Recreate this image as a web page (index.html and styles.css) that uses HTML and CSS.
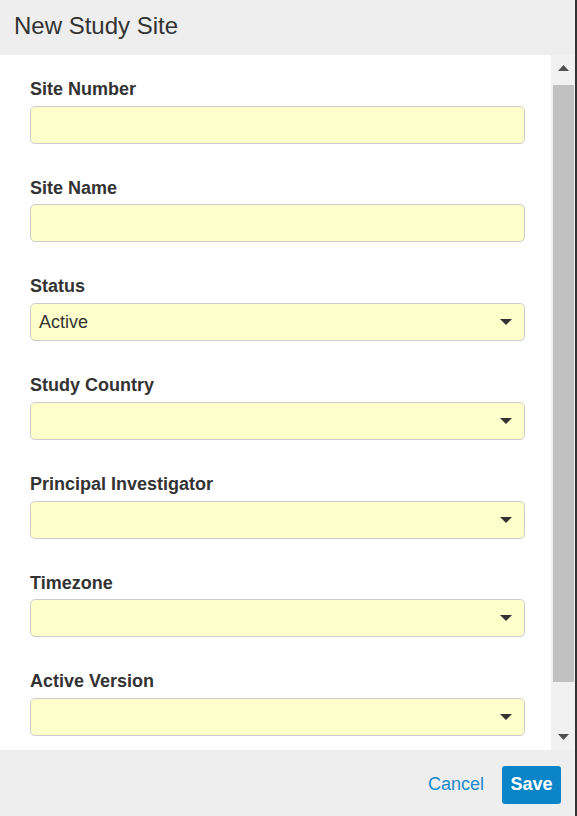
FILE: index.html
```
<!DOCTYPE html>
<html>
<head>
<meta charset="utf-8">
<title>New Study Site</title>
<link rel="stylesheet" href="styles.css">
</head>
<body>
<div class="dialog">
  <div class="header"><h1 class="title">New Study Site</h1></div>
  <div class="middle">
    <div class="content">
      <div class="group">
        <label class="label">Site Number</label>
        <input class="input" type="text">
      </div>
      <div class="group">
        <label class="label">Site Name</label>
        <input class="input" type="text">
      </div>
      <div class="group">
        <label class="label">Status</label>
        <div class="input select"><span class="value">Active</span><svg class="caret" width="12" height="6" viewBox="0 0 12 6"><path d="M0 0H12L6 6Z"/></svg></div>
      </div>
      <div class="group">
        <label class="label">Study Country</label>
        <div class="input select"><span class="value"></span><svg class="caret" width="12" height="6" viewBox="0 0 12 6"><path d="M0 0H12L6 6Z"/></svg></div>
      </div>
      <div class="group">
        <label class="label">Principal Investigator</label>
        <div class="input select"><span class="value"></span><svg class="caret" width="12" height="6" viewBox="0 0 12 6"><path d="M0 0H12L6 6Z"/></svg></div>
      </div>
      <div class="group">
        <label class="label">Timezone</label>
        <div class="input select"><span class="value"></span><svg class="caret" width="12" height="6" viewBox="0 0 12 6"><path d="M0 0H12L6 6Z"/></svg></div>
      </div>
      <div class="group">
        <label class="label">Active Version</label>
        <div class="input select"><span class="value"></span><svg class="caret" width="12" height="6" viewBox="0 0 12 6"><path d="M0 0H12L6 6Z"/></svg></div>
      </div>
    </div>
    <div class="scrollbar">
      <div class="sb-btn"><svg width="11" height="6" viewBox="0 0 11 6"><path d="M5.5 0L11 6H0Z"/></svg></div>
      <div class="sb-track"><div class="sb-thumb"></div></div>
      <div class="sb-btn"><svg width="11" height="6" viewBox="0 0 11 6"><path d="M0 0H11L5.5 6Z"/></svg></div>
    </div>
  </div>
  <div class="footer">
    <a class="cancel" href="#">Cancel</a>
    <button class="save" type="button">Save</button>
  </div>
</div>
</body>
</html>
```
FILE: styles.css
```
html, body {
  margin: 0;
  padding: 0;
  height: 100%;
}
body {
  background: #333333;
  font-family: "Liberation Sans", Arial, sans-serif;
  color: #333333;
}
.dialog {
  width: 575px;
  height: 816px;
  display: flex;
  flex-direction: column;
  background: #ffffff;
}
.header {
  height: 55px;
  flex: none;
  background: #eeeeee;
  display: flex;
  align-items: center;
  padding-left: 14px;
  box-sizing: border-box;
}
.title {
  margin: 0;
  font-size: 24px;
  font-weight: normal;
  color: #333333;
  line-height: 28px;
  position: relative;
  top: -2px;
}
.middle {
  flex: none;
  height: 695px;
  display: flex;
}
.content {
  flex: 1;
  overflow: hidden;
  padding: 22px 26px 0 30px;
  background: #ffffff;
}
.group {
  margin-bottom: 32px;
}
.label {
  display: block;
  font-weight: bold;
  font-size: 18px;
  line-height: 25.7px;
  margin-bottom: 3px;
  color: #333333;
}
.input {
  display: block;
  box-sizing: border-box;
  width: 100%;
  height: 38px;
  margin: 0;
  border: 1px solid #cccccc;
  border-radius: 5px;
  background: #ffffcc;
  font-family: "Liberation Sans", Arial, sans-serif;
  font-size: 18px;
  color: #333333;
  padding: 0 8px;
  outline: none;
}
.select {
  display: flex;
  align-items: center;
  justify-content: space-between;
  padding-right: 12px;
}
.value {
  line-height: 20px;
}
.caret {
  display: block;
  fill: #333333;
}
.scrollbar {
  flex: none;
  width: 24px;
  background: #f1f1f1;
  display: flex;
  flex-direction: column;
}
.sb-btn {
  height: 26px;
  flex: none;
  display: flex;
  align-items: center;
  justify-content: center;
  padding-left: 1px;
}
.sb-btn svg {
  display: block;
  fill: #505050;
}
.sb-track {
  flex: 1;
  padding: 4px 1px 0 2px;
}
.sb-thumb {
  height: 597px;
  background: #c1c1c1;
}
.footer {
  flex: 1;
  background: #eeeeee;
  display: flex;
  align-items: center;
  justify-content: flex-end;
  gap: 18px;
  padding-right: 14px;
  padding-top: 3px;
}
.cancel {
  font-size: 18px;
  color: #1b8acb;
  text-decoration: none;
}
.save {
  height: 38px;
  width: 59px;
  padding: 0;
  border: 0;
  border-radius: 3px;
  background: #0b85c7;
  color: #ffffff;
  font-family: "Liberation Sans", Arial, sans-serif;
  font-size: 18px;
  font-weight: bold;
}
```
